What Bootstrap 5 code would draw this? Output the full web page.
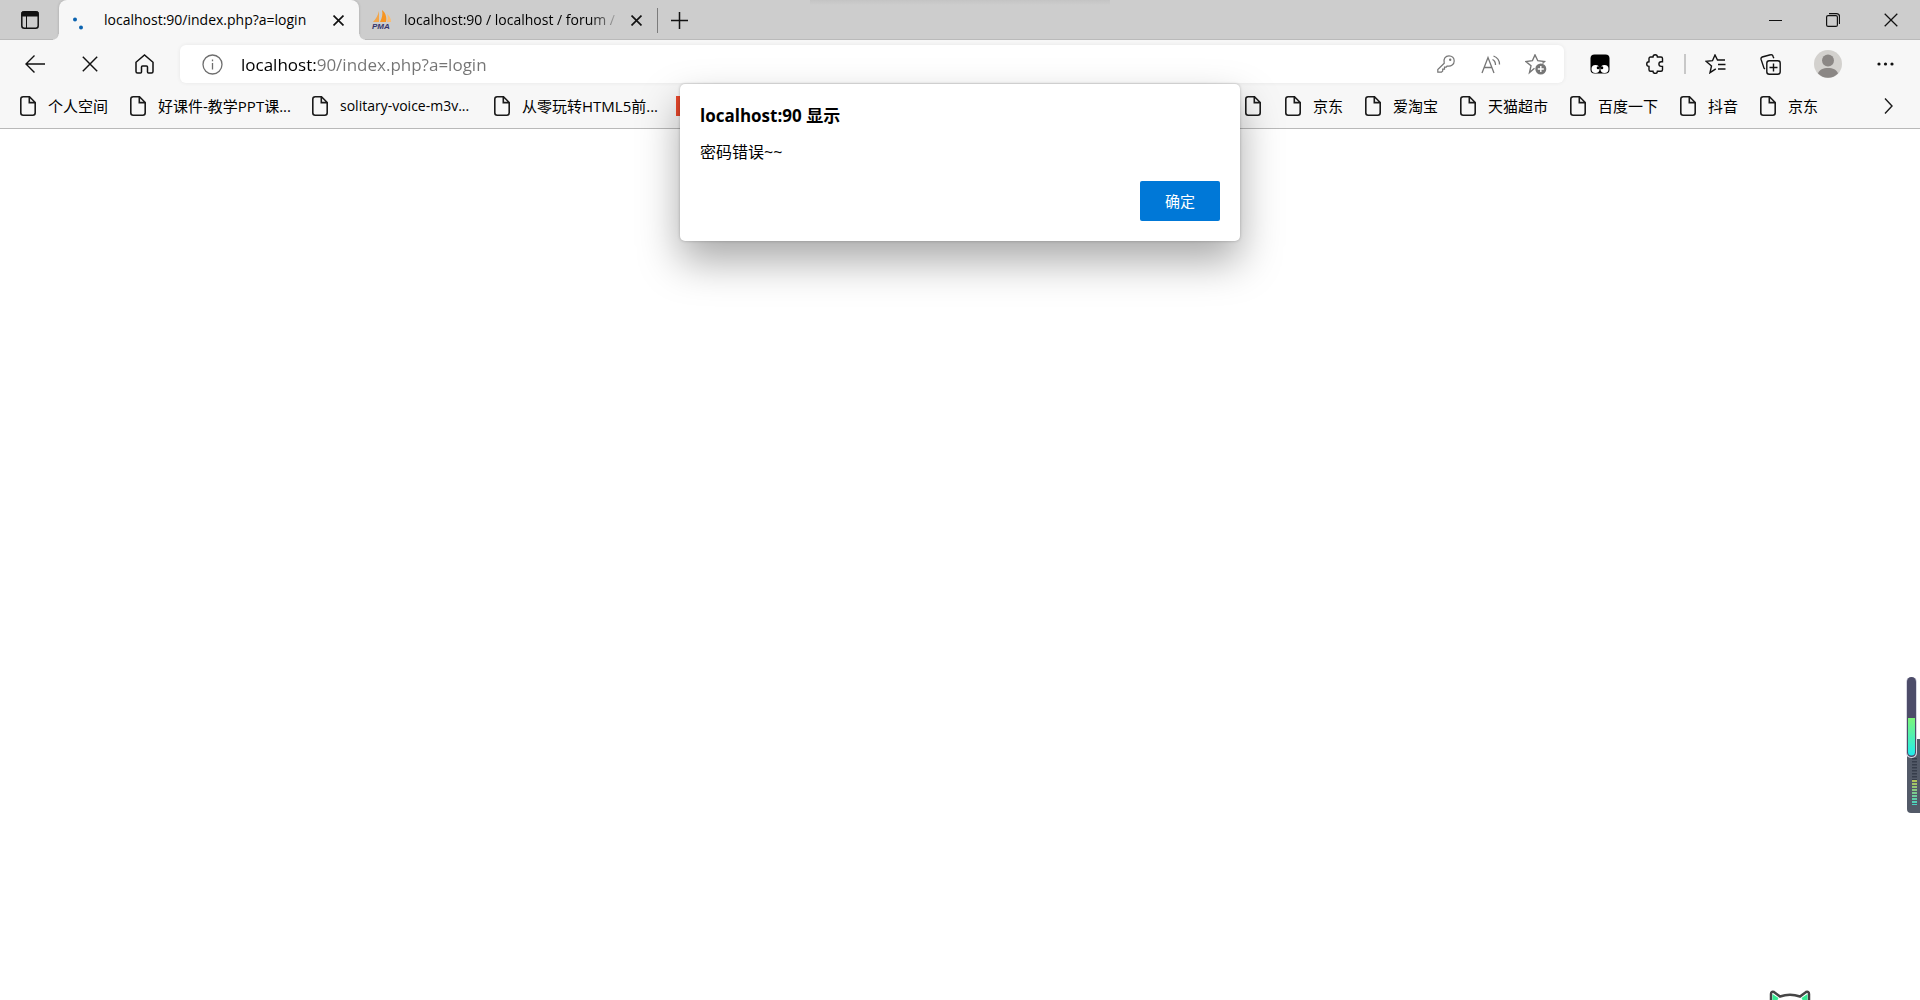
<!DOCTYPE html>
<html lang="zh-CN">
<head>
<meta charset="utf-8">
<meta name="viewport" content="width=device-width, initial-scale=1">
<title>localhost:90/index.php?a=login</title>
<link href="https://cdn.jsdelivr.net/npm/bootstrap@5.3.0/dist/css/bootstrap.min.css" rel="stylesheet">
<style>
body{font-family:"Open Sans","Noto Sans CJK SC",sans-serif;font-size:14px;line-height:20px;color:#000;background:#fff;overflow:hidden}
svg{display:block;flex:none;fill:none;stroke:currentColor}
svg.flat{stroke:none;fill:currentColor}
button{border:0;background:none;padding:0;color:#111;display:flex;align-items:center;justify-content:center;flex:none}
.tabstrip{height:40px;background:#cdcdcd;box-shadow:inset 0 -1px #bababa}
.tabs-btn{width:59px}
.tab-item{width:298px;padding:0 12px;height:40px}
.tab-item.current{position:relative;width:300px;background:#f7f7f7;border-radius:8px 8px 0 0;box-shadow:0 0 3px rgba(0,0,0,.2);clip-path:inset(0 -8px 0 -8px)}
.tab-item.current::before,.tab-item.current::after{content:"";position:absolute;bottom:0;width:6px;height:6px}
.tab-item.current::before{right:100%;background:radial-gradient(circle at 0 0,transparent 5px,#f7f7f7 6px)}
.tab-item.current::after{left:100%;background:radial-gradient(circle at 100% 0,transparent 5px,#f7f7f7 6px)}
.tab-item a{color:#000;text-decoration:none;white-space:nowrap;padding-bottom:1px;margin-left:13px}
.tab-item .fade-end{margin-left:11px;-webkit-mask-image:linear-gradient(90deg,#000 88%,rgba(0,0,0,.2));mask-image:linear-gradient(90deg,#000 88%,rgba(0,0,0,.2))}
.tab-close{width:18px;height:20px}
.tab-rule{width:1px;height:25px;background:#7b7b7b}
.new-tab{width:42px}
.win-btn{width:58px}
.toolbar{height:48px;background:#f7f7f7;padding:0 7px}
.tool-btn{width:55px;height:40px}
.address{height:38px;background:#fff;border-radius:6px;margin:0 8px;padding:0 6px 0 22px;box-shadow:0 0 4px rgba(0,0,0,.07);color:#6e6e6e}
.address button{color:#767676;width:45px}
.url-text{flex:1;min-width:0;border:0;outline:0;padding:0;font-size:17px;line-height:24px;height:28px;margin-left:18px;color:transparent;caret-color:#000;background:linear-gradient(90deg,#000 75px,#747474 75px);-webkit-background-clip:text;background-clip:text}
.tool-rule{width:2px;height:20px;background:#c8c8c8;margin:0 2px}
.avatar-btn{width:60px}
.bookmarks{height:41px;background:#f7f7f7;border-bottom:1px solid #b9b9b9;padding:0 18px 4px 20px}
.bookmarks a{display:flex;align-items:center;gap:12px;padding-right:22px;color:#000;text-decoration:none;white-space:nowrap;flex:none}
.bookmarks .han{font-size:15px}
.bookmarks .icon-only{padding-right:24px}
.bookmarks svg{color:#1a1a1a}
.cut-title{width:132px}
.more-btn{width:28px;margin-left:34px}
.dialog-box{position:absolute;top:84px;left:0;right:0;margin:0 auto;width:560px;padding:20px;background:#fff;border-radius:5px;box-shadow:0 0 3px rgba(0,0,0,.25),0 20px 42px rgba(0,0,0,.34)}
.dialog-box h1{font-size:17px;line-height:24px;font-weight:700;margin:0 0 12px}
.dialog-box p{font-size:16px;line-height:24px;margin:0 0 17px}
.ok-btn{width:80px;height:40px;background:#0078d7;color:#fff;border-radius:2px;font-size:15px;margin-left:auto}
.meter{position:absolute;right:0;top:677px}
.kitty{position:absolute;right:108px;bottom:0}
.top-shade{position:absolute;top:0;left:0;right:0;margin:0 auto;width:300px;height:5px;background:linear-gradient(#c4c4c4,#cdcdcd)}
</style>
<script src="https://cdn.jsdelivr.net/npm/bootstrap@5.3.0/dist/js/bootstrap.bundle.min.js"></script>
</head>
<body class="vh-100 position-relative">
<svg width="0" height="0" class="position-absolute" aria-hidden="true">
  <symbol id="page" viewBox="0 0 16 20"><path d="M3.200.8h6.300l5.700 5.700v10.300a2.400 2.400 0 0 1-2.400 2.400H3.200A2.400 2.400 0 0 1 .8 16.800V3.200A2.400 2.400 0 0 1 3.200.8M9.300 1v5.600h5.700" stroke-width="1.600"/></symbol>
  <symbol id="cross" viewBox="0 0 10 10"><path d="M.5.5l9 9M9.500.5l-9 9"/></symbol>
</svg>

<header>
  <div class="tabstrip d-flex align-items-stretch">
    <button class="tabs-btn" aria-label="标签操作"><svg width="18" height="18" viewBox="0 0 18 18"><rect x=".8" y=".8" width="16.400" height="16.400" rx="2.500" stroke-width="1.500"/><path d="M1 1h16v4H1z" fill="currentColor"/><path d="M5.500 5v12"/></svg></button>
    <div class="tab-item current d-flex align-items-center">
      <svg class="flat" width="20" height="20" viewBox="0 0 20 20"><circle cx="4" cy="9.500" r="2" fill="#0b63b0"/><circle cx="10" cy="17.500" r="2" fill="#0b63b0"/></svg>
      <a class="me-auto" href="#">localhost:90/index.php?a=login</a>
      <button class="tab-close" aria-label="关闭"><svg width="11" height="11" stroke-width="1.500"><use href="#cross"/></svg></button>
    </div>
    <div class="tab-item d-flex align-items-center">
      <svg class="flat" width="22" height="20" viewBox="0 0 22 20"><path d="M8 1v11H2C5 9 7 5 8 1z" fill="#f3a64a"/><path d="M11 0c4 3 5 8 4 12H9c2-4 3-8 2-12z" fill="#f79420"/><path d="M16 4c3 2 4 5 4 8h-4c1-3 1-5 0-8z" fill="#fabd73"/><text x="1" y="19" font-family="Liberation Sans,sans-serif" font-size="8" font-weight="700" font-style="italic" fill="#34346b">PMA</text></svg>
      <a class="fade-end me-auto" href="#">localhost:90 / localhost / forum /</a>
      <button class="tab-close" aria-label="关闭"><svg width="11" height="11" stroke-width="1.500"><use href="#cross"/></svg></button>
    </div>
    <div class="tab-rule align-self-center"></div>
    <button class="new-tab" aria-label="新建标签页"><svg width="17" height="17" viewBox="0 0 17 17" stroke-width="1.500"><path d="M8.500 0v17M0 8.500h17"/></svg></button>
    <div class="d-flex ms-auto">
      <button class="win-btn" aria-label="最小化"><svg width="13" height="13"><path d="M0 6.500h13"/></svg></button>
      <button class="win-btn" aria-label="还原"><svg width="14" height="14" viewBox="0 0 14 14" stroke-width="1.200"><rect x=".6" y="2.600" width="10.800" height="10.800" rx="1.500"/><path d="M3 .6h7.500a3 3 0 0 1 3 3V11"/></svg></button>
      <button class="win-btn" aria-label="关闭窗口"><svg width="14" height="14" stroke-width=".9"><use href="#cross"/></svg></button>
    </div>
  </div>

  <nav class="toolbar d-flex align-items-center" aria-label="工具栏">
    <button class="tool-btn" aria-label="返回"><svg width="20" height="18" viewBox="0 0 20 18" stroke-width="1.400"><path d="M20 9H.8M9.500.5L1 9l8.500 8.500"/></svg></button>
    <button class="tool-btn" aria-label="停止"><svg width="16" height="16" stroke-width=".9"><use href="#cross"/></svg></button>
    <button class="tool-btn" aria-label="主页"><svg width="19" height="20" viewBox="0 0 19 20" stroke-width="1.500"><path d="M1 8.300 9.500 1 18 8.300V17.500a1.500 1.500 0 0 1-1.500 1.500h-3a1 1 0 0 1-1-1v-5a1 1 0 0 0-1-1h-4a1 1 0 0 0-1 1v5a1 1 0 0 1-1 1h-3A1.500 1.500 0 0 1 1 17.500z"/></svg></button>
    <div class="address d-flex align-items-center flex-fill">
      <svg width="21" height="21" viewBox="0 0 21 21" stroke-width="1.300"><circle cx="10.500" cy="10.500" r="9.500"/><path d="M10.500 9v6.500M10.500 5.500v1.700"/></svg>
      <input class="url-text" type="text" value="localhost:90/index.php?a=login" aria-label="地址栏">
      <button aria-label="密码"><svg width="18" height="18" viewBox="0 0 18 18" stroke-width="1.200"><path d="M7.200 8.200C6 4 8.500.8 12 .8c3 0 5.200 2.200 5.200 5.100 0 3.500-3 6-7 5.100l-1 1.200H7.500v2H5.700v1.800l-1.200 1.200H.8v-2.700z"/><circle cx="13.200" cy="4.800" r=".6"/></svg></button>
      <button aria-label="朗读"><svg width="20" height="19" viewBox="0 0 20 19" stroke-width="1.300"><path d="M1 18 7 2.500 13 18M3.200 12.500h7.600M11.500 4.500c2 1 3 3 3 5.500M12.500 1c4 1.500 6 4.500 6 8.500"/></svg></button>
      <button aria-label="收藏"><svg width="22" height="21" viewBox="0 0 22 21" stroke-width="1.400"><path d="M9.500 14.200 4.500 18.500 6 11.800.9 7.500l6.500-.8L10 .9l2.800 5.800 6.700.8-2 2"/><circle cx="15.800" cy="15" r="5.500" fill="currentColor" stroke="none"/><path d="M15.800 12v6M12.800 15h6" stroke="#fff"/></svg></button>
    </div>
    <button class="tool-btn" aria-label="扩展"><svg class="flat" width="20" height="20" viewBox="0 0 20 20"><rect x=".5" y=".5" width="19" height="19" rx="4" fill="#000"/><circle cx="5.500" cy="15" r="4" fill="#fff"/><circle cx="14.500" cy="15" r="4" fill="#fff"/><circle cx="8.200" cy="13.800" r="1.500" fill="#000"/><circle cx="11.800" cy="13.800" r="1.500" fill="#000"/></svg></button>
    <button class="tool-btn" aria-label="扩展管理"><svg width="19" height="20" viewBox="0 0 19 20" stroke-width="1.400"><path d="M5.500 3H8a2.200 2.200 0 0 1 4.400 0H16a1.500 1.500 0 0 1 1.500 1.500v3.300h-1.300a2.300 2.300 0 0 0 0 4.600h1.300v3.300A1.500 1.500 0 0 1 16 17.200h-3.600a2.200 2.200 0 0 1-4.400 0H5.500A1.500 1.500 0 0 1 4 15.700v-3.300a2.300 2.300 0 1 1 0-4.600V4.500A1.500 1.500 0 0 1 5.500 3z"/></svg></button>
    <div class="tool-rule"></div>
    <button class="tool-btn" aria-label="收藏夹"><svg width="21" height="20" viewBox="0 0 21 20" stroke-width="1.400"><path d="M10.800 14.800 5 18.700 6.500 12 1 7.300l6.500-.6L10 1l2.500 5H20M13 10.500h7.500M13 15h7.500"/></svg></button>
    <button class="tool-btn" aria-label="集锦"><svg width="21" height="21" viewBox="0 0 21 21" stroke-width="1.400"><rect x="6.800" y="6.800" width="13.400" height="13.400" rx="2.500"/><path d="M13.500 9.500v8M9.500 13.500h8M5 15l-1-.8L1 5.200A2 2 0 0 1 2.200 3L10.500.8A2 2 0 0 1 13 2.200l.8 2"/></svg></button>
    <button class="tool-btn avatar-btn" aria-label="个人资料"><svg class="flat" width="28" height="28" viewBox="0 0 28 28"><circle cx="14" cy="14" r="14" fill="#d3d1ce"/><circle cx="14" cy="10.500" r="6" fill="#8b8785"/><path d="M4 23.500c1.500-4 5-5.500 10-5.500s8.500 1.500 10 5.500a14 14 0 0 1-20 0z" fill="#8b8785"/></svg></button>
    <button class="tool-btn" aria-label="设置及其他"><svg class="flat" width="17" height="4" viewBox="0 0 17 4"><circle cx="2" cy="2" r="1.600"/><circle cx="8.500" cy="2" r="1.600"/><circle cx="15" cy="2" r="1.600"/></svg></button>
  </nav>

  <nav class="bookmarks d-flex align-items-center" aria-label="书签栏">
    <a href="#" class="han"><svg width="16" height="20"><use href="#page"/></svg>个人空间</a>
    <a href="#" class="han"><svg width="16" height="20"><use href="#page"/></svg><span class="cut-title">好课件-教学PPT课...</span></a>
    <a href="#"><svg width="16" height="20"><use href="#page"/></svg><span class="cut-title">solitary-voice-m3v...</span></a>
    <a href="#" class="han"><svg width="16" height="20"><use href="#page"/></svg><span class="cut-title">从零玩转HTML5前...</span></a>
    <a href="#" aria-label="书签"><svg class="flat" width="20" height="20"><path d="M0 0h20v20H0z" fill="#e8472b"/></svg></a>
    <a href="#" class="icon-only ms-auto" aria-label="书签"><svg width="16" height="20"><use href="#page"/></svg></a>
    <a href="#" class="han"><svg width="16" height="20"><use href="#page"/></svg>京东</a>
    <a href="#" class="han"><svg width="16" height="20"><use href="#page"/></svg>爱淘宝</a>
    <a href="#" class="han"><svg width="16" height="20"><use href="#page"/></svg>天猫超市</a>
    <a href="#" class="han"><svg width="16" height="20"><use href="#page"/></svg>百度一下</a>
    <a href="#" class="han"><svg width="16" height="20"><use href="#page"/></svg>抖音</a>
    <a href="#" class="han"><svg width="16" height="20"><use href="#page"/></svg>京东</a>
    <button class="more-btn" aria-label="更多书签"><svg width="9" height="16" viewBox="0 0 9 16" stroke-width="1.400"><path d="M1 .5 8 8l-7 7.500"/></svg></button>
  </nav>
</header>

<div class="top-shade"></div>

<section class="dialog-box" role="alertdialog" aria-labelledby="dlg-title">
  <h1 id="dlg-title">localhost:90 显示</h1>
  <p>密码错误~~</p>
  <button class="ok-btn">确定</button>
</section>

<svg class="meter flat" width="14" height="138" viewBox="0 0 14 138">
  <defs><linearGradient id="lv" x1="0" y1="0" x2="0" y2="1"><stop offset="0" stop-color="#7cf57a"/><stop offset="1" stop-color="#22ecec"/></linearGradient>
  <linearGradient id="lw" x1="0" y1="0" x2="0" y2="1"><stop offset="0" stop-color="#b5c455"/><stop offset="1" stop-color="#45d3c3"/></linearGradient></defs>
  <path d="M1 62h13v74H5a4 4 0 0 1-4-4z" fill="#535a68"/>
  <path d="M8.500 81v22" stroke="#363d4b" stroke-width="5" stroke-dasharray="1.500 1.500"/>
  <path d="M6 103h5v25H6z" fill="url(#lw)"/>
  <path d="M8.500 105v23" stroke="#535a68" stroke-width="5" stroke-dasharray="1 2"/>
  <rect x="0" y="0" width="11" height="81" rx="5" fill="#d7d7e2"/>
  <rect x="1" y="0" width="9" height="80" rx="4.500" fill="#4d4c69"/>
  <path d="M2 41h7v34a3.500 3.500 0 0 1-7 0z" fill="url(#lv)"/>
</svg>
<svg class="kitty" width="44" height="10" viewBox="0 0 44 10"><path d="M3 13V4Q3 1 6 2l6 4.500Q22 3 32 6.500L38 2q3-1 3 2v9" fill="#fff" stroke="#454545" stroke-width="2.500"/><path class="flat" d="M4.500 11V4l6 4-2 4zM39.500 11V4l-6 4 2 4z" fill="#35ea92" stroke="none"/></svg>
</body>
</html>
